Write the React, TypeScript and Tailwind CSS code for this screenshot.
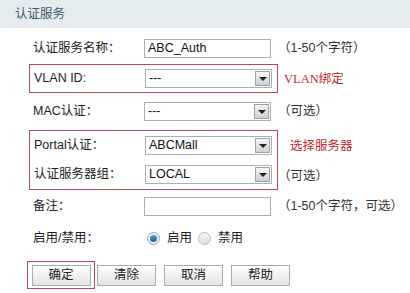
import React from 'react';

const FONT = { fontFamily: '"Liberation Sans", "Noto Sans CJK SC", sans-serif' };

function TextBox({ value }: { value?: string }) {
  return (
    <div className="w-[127px] h-[19px] border border-[#a9b0b8] bg-white flex items-center px-[3px] text-[12.5px] text-[#111]">
      {value}
    </div>
  );
}

function Select({ value }: { value: string }) {
  return (
    <div className="w-[127px] h-[19px] border border-[#a9b0b8] bg-white flex items-center justify-between pl-[3px] pr-[1px]">
      <span className="text-[12.5px] text-[#111] leading-none">{value}</span>
      <span className="w-[15px] h-[15px] border border-[#9aa0a6] bg-gradient-to-b from-[#f4f4f4] to-[#d0d0d0] flex items-center justify-center">
        <span className="w-0 h-0 border-l-[4px] border-r-[4px] border-t-[4px] border-l-transparent border-r-transparent border-t-[#222]" />
      </span>
    </div>
  );
}

function Row({ label, children, hint, h, hintClass = 'text-[#333]' }: { label: string; children: React.ReactNode; hint?: string; h: string; hintClass?: string }) {
  return (
    <div className={`flex items-center ${h}`}>
      <div className="w-[115px] pl-[4px] text-[12.5px] text-[#222]">{label}</div>
      {children}
      {hint && <div className={`ml-[7px] text-[12.5px] whitespace-nowrap ${hintClass}`}>{hint}</div>}
    </div>
  );
}

function Btn({ text }: { text: string }) {
  return (
    <div className="w-[59px] h-[21px] border border-[#a8acb0] bg-gradient-to-b from-white to-[#e3e3e3] flex items-center justify-center text-[12.5px] text-[#222]">
      {text}
    </div>
  );
}

export default function App() {
  return (
    <div className="w-[410px] h-[293px] bg-white overflow-hidden" style={FONT}>
      <div className="h-[28px] bg-[#e5ecf0] flex items-center pl-[15px] text-[12.5px] text-[#40596b]">认证服务</div>

      <div className="pl-[29px] pt-[5px]">
        <Row label="认证服务名称：" h="h-[30px]" hint="（1-50个字符）">
          <TextBox value="ABC_Auth" />
        </Row>

        <div className="mt-[1px] w-[249px] h-[29px] border border-[#b54a52] relative">
          <Row label="VLAN ID:" h="h-[27px]">
            <Select value="---" />
          </Row>
          <div className="absolute left-[254px] top-[5px] text-[12.5px] text-[#c0282e] whitespace-nowrap" style={{ fontFamily: '"Liberation Serif", "Noto Sans CJK SC", serif' }}>
            VLAN绑定
          </div>
        </div>

        <Row label="MAC认证：" h="h-[37px]" hint="（可选）">
          <Select value="---" />
        </Row>

        <div className="w-[249px] h-[60px] border border-[#b54a52] relative">
          <Row label="Portal认证：" h="h-[29px]">
            <Select value="ABCMall" />
          </Row>
          <div className="flex items-center h-[29px] w-[400px]">
            <div className="w-[115px] pl-[4px] text-[12.5px] text-[#222]">认证服务器组：</div>
            <Select value="LOCAL" />
          </div>
          <div className="absolute left-[260px] top-[6px] text-[12.5px] text-[#c0282e] whitespace-nowrap">选择服务器</div>
          <div className="absolute left-[248px] top-[36px] text-[12.5px] text-[#333] whitespace-nowrap">（可选）</div>
        </div>

        <Row label="备注：" h="h-[32px]" hint="（1-50个字符，可选）">
          <TextBox />
        </Row>

        <Row label="启用/禁用：" h="h-[32px]">
          <div className="flex items-center text-[12.5px] text-[#222]">
            <span className="w-[13px] h-[13px] rounded-full border border-[#9aa4ae] bg-[#eef2f5] flex items-center justify-center ml-[3px]">
              <span className="w-[7px] h-[7px] rounded-full bg-gradient-to-b from-[#5c9bd0] to-[#1e5d95]" />
            </span>
            <span className="ml-[7px]">启用</span>
            <span className="w-[13px] h-[13px] rounded-full border border-[#b4bac0] bg-gradient-to-b from-[#f6f6f6] to-[#dcdcdc] ml-[6px]" />
            <span className="ml-[7px]">禁用</span>
          </div>
        </Row>

        <div className="flex items-center mt-[7px] -ml-[2px]">
          <div className="w-[68px] h-[28px] border border-[#b54a52] flex items-center justify-center">
            <Btn text="确定" />
          </div>
          <div className="ml-[2px] flex gap-[8px]">
            <Btn text="清除" />
            <Btn text="取消" />
            <Btn text="帮助" />
          </div>
        </div>
      </div>
    </div>
  );
}
